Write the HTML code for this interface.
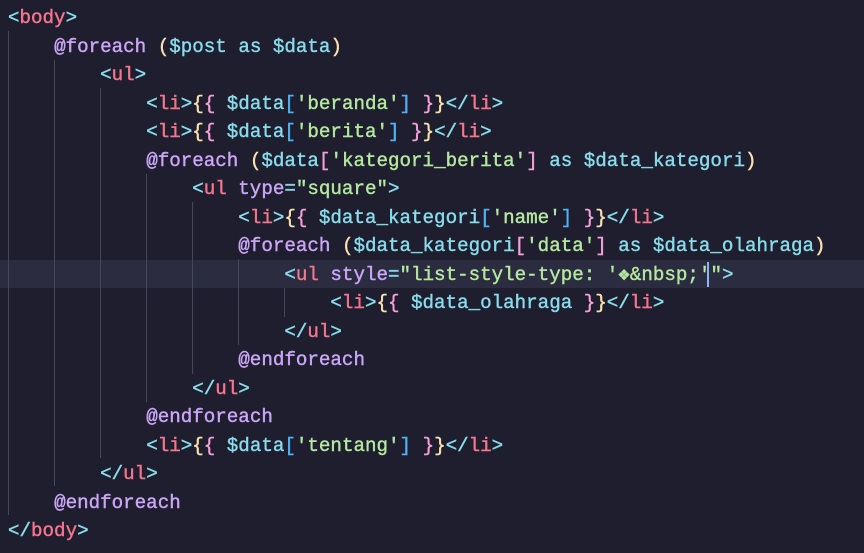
<!DOCTYPE html><html><head><style>
body{margin:0;background:#1e1e2e;width:864px;height:553px;overflow:hidden;position:relative}
pre{position:absolute;left:8px;top:4px;margin:0;font-family:"Liberation Mono",monospace;font-size:19.2px;line-height:28.5px;color:#cdd6f4;white-space:pre;-webkit-text-stroke:0.4px currentColor}
.hl{position:absolute;left:0;width:864px;top:260px;height:28px;background:#2b2c40}
.g{position:absolute;width:1px;background:#45475a}
.b{color:#89dceb}.t{color:#f7768e}.k{color:#cba6f7}.v{color:#89dceb}.s{color:#b5e8a0}.y{color:#f9e2af}.p{color:#f5a0d8}.bl{color:#4fb3f5}.a{color:#cba6f7}
.cur{position:absolute;left:707px;top:262px;width:2px;height:25px;background:#89b4fa}
</style></head><body>
<div class="hl"></div>
<div class="g" style="left:8px;top:31px;height:484px"></div>
<div class="g" style="left:54px;top:60px;height:426px"></div>
<div class="g" style="left:100px;top:88px;height:370px"></div>
<div class="g" style="left:146px;top:174px;height:228px"></div>
<div class="g" style="left:192px;top:202px;height:172px"></div>
<div class="g" style="left:238px;top:259px;height:86px"></div>
<div class="g" style="left:284px;top:288px;height:29px"></div>
<div class="cur"></div>
<pre><span class="b">&lt;</span><span class="t">body</span><span class="b">&gt;</span>
    <span class="k">@foreach</span> <span class="y">(</span><span class="v">$post</span> <span class="v">as</span> <span class="v">$data</span><span class="y">)</span>
        <span class="b">&lt;</span><span class="t">ul</span><span class="b">&gt;</span>
            <span class="b">&lt;</span><span class="t">li</span><span class="b">&gt;</span><span class="y">{</span><span class="p">{</span> <span class="v">$data</span><span class="bl">[</span><span class="s">'beranda'</span><span class="bl">]</span> <span class="p">}</span><span class="y">}</span><span class="b">&lt;/</span><span class="t">li</span><span class="b">&gt;</span>
            <span class="b">&lt;</span><span class="t">li</span><span class="b">&gt;</span><span class="y">{</span><span class="p">{</span> <span class="v">$data</span><span class="bl">[</span><span class="s">'berita'</span><span class="bl">]</span> <span class="p">}</span><span class="y">}</span><span class="b">&lt;/</span><span class="t">li</span><span class="b">&gt;</span>
            <span class="k">@foreach</span> <span class="y">(</span><span class="v">$data</span><span class="p">[</span><span class="s">'kategori_berita'</span><span class="p">]</span> <span class="v">as</span> <span class="v">$data_kategori</span><span class="y">)</span>
                <span class="b">&lt;</span><span class="t">ul</span> <span class="a">type</span><span class="b">=</span><span class="s">"square"</span><span class="b">&gt;</span>
                    <span class="b">&lt;</span><span class="t">li</span><span class="b">&gt;</span><span class="y">{</span><span class="p">{</span> <span class="v">$data_kategori</span><span class="bl">[</span><span class="s">'name'</span><span class="bl">]</span> <span class="p">}</span><span class="y">}</span><span class="b">&lt;/</span><span class="t">li</span><span class="b">&gt;</span>
                    <span class="k">@foreach</span> <span class="y">(</span><span class="v">$data_kategori</span><span class="p">[</span><span class="s">'data'</span><span class="p">]</span> <span class="v">as</span> <span class="v">$data_olahraga</span><span class="y">)</span>
                        <span class="b">&lt;</span><span class="t">ul</span> <span class="a">style</span><span class="b">=</span><span class="s">"list-style-type: '❖&amp;nbsp;'"</span><span class="b">&gt;</span>
                            <span class="b">&lt;</span><span class="t">li</span><span class="b">&gt;</span><span class="y">{</span><span class="p">{</span> <span class="v">$data_olahraga</span> <span class="p">}</span><span class="y">}</span><span class="b">&lt;/</span><span class="t">li</span><span class="b">&gt;</span>
                        <span class="b">&lt;/</span><span class="t">ul</span><span class="b">&gt;</span>
                    <span class="k">@endforeach</span>
                <span class="b">&lt;/</span><span class="t">ul</span><span class="b">&gt;</span>
            <span class="k">@endforeach</span>
            <span class="b">&lt;</span><span class="t">li</span><span class="b">&gt;</span><span class="y">{</span><span class="p">{</span> <span class="v">$data</span><span class="bl">[</span><span class="s">'tentang'</span><span class="bl">]</span> <span class="p">}</span><span class="y">}</span><span class="b">&lt;/</span><span class="t">li</span><span class="b">&gt;</span>
        <span class="b">&lt;/</span><span class="t">ul</span><span class="b">&gt;</span>
    <span class="k">@endforeach</span>
<span class="b">&lt;/</span><span class="t">body</span><span class="b">&gt;</span></pre>
</body></html>
